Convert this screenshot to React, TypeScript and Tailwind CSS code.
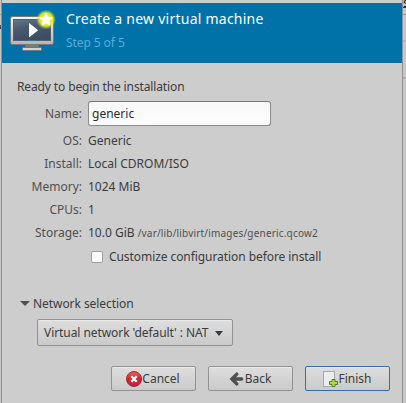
import type { ReactNode } from "react";

function MachineIcon() {
  return (
    <svg width="48" height="46" viewBox="0 0 48 46" className="block shrink-0">
      <defs>
        <linearGradient id="frame" x1="0" y1="0" x2="0" y2="1">
          <stop offset="0" stopColor="#f4f4f2" />
          <stop offset="1" stopColor="#b4b4b2" />
        </linearGradient>
        <linearGradient id="screen" x1="0" y1="0" x2="0.4" y2="1">
          <stop offset="0" stopColor="#66788c" />
          <stop offset="0.5" stopColor="#47586d" />
          <stop offset="1" stopColor="#3c4c61" />
        </linearGradient>
        <radialGradient id="glow">
          <stop offset="0" stopColor="#f4f51a" />
          <stop offset="0.65" stopColor="#e9ef22" stopOpacity="0.95" />
          <stop offset="1" stopColor="#b9d63c" stopOpacity="0" />
        </radialGradient>
      </defs>
      <path d="M17 37h14v4h-14z" fill="#777976" />
      <rect x="14.5" y="40.5" width="19" height="3" rx="1" fill="#d4d4d2" stroke="#777976" />
      <rect x="2.5" y="9.500" width="43" height="28" rx="2" fill="url(#frame)" stroke="#777976" />
      <rect x="5.500" y="12.500" width="37" height="21" fill="url(#screen)" stroke="#53606f" />
      <path d="M21 16v14.500l9.200-7.250z" fill="#fff" />
      <circle cx="38" cy="12.500" r="10" fill="url(#glow)" />
      <path d="M38 6l1.900 4.100 4.500.6-3.300 3.100.8 4.500-3.900-2.200-3.900 2.200.8-4.500-3.300-3.100 4.500-.6z" fill="#fff" stroke="#fff" strokeWidth="0.6" />
    </svg>
  );
}

function CancelIcon() {
  return (
    <svg width="16" height="16" viewBox="0 0 16 16" className="block shrink-0">
      <defs>
        <linearGradient id="red" x1="0" y1="0" x2="0" y2="1">
          <stop offset="0" stopColor="#e8625c" />
          <stop offset="0.5" stopColor="#cf2733" />
          <stop offset="1" stopColor="#b42450" />
        </linearGradient>
      </defs>
      <circle cx="8" cy="8" r="7.500" fill="url(#red)" stroke="#ad2530" />
      <path d="M5.300 5.300l5.400 5.400M10.700 5.300l-5.400 5.400" stroke="#fff" strokeWidth="2.300" />
    </svg>
  );
}

function BackIcon() {
  return (
    <svg width="16" height="16" viewBox="0 0 16 16" className="block shrink-0">
      <path d="M7.800 3.100L2.900 8l4.900 4.900M4 8h8.700" fill="none" stroke="#505050" strokeWidth="3.400" strokeLinecap="round" />
    </svg>
  );
}

function FinishIcon() {
  return (
    <svg width="16" height="16" viewBox="0 0 16 16" className="block shrink-0">
      <rect x="1.500" y="0.500" width="11" height="15" fill="#ededed" stroke="#a8a8a8" />
      <path d="M10 8.500h3v2h2.500v3h-2.500v2h-3v-2h-2.500v-3h2.500z" fill="#b5d842" stroke="#55801c" />
    </svg>
  );
}

function Row({ label, children }: { label: string; children: ReactNode }) {
  return (
    <div className="flex h-[23px] items-center">
      <span className="w-[81px] pr-[1px] text-right text-[#505050]">{label}</span>
      <span className="pl-[5px]">{children}</span>
    </div>
  );
}

function DialogButton({ icon, text, focused }: { icon: ReactNode; text: string; focused?: boolean }) {
  return (
    <button
      className={`flex h-[25px] w-[85px] items-center justify-center rounded-[2px] border bg-linear-to-b from-[#dedede] to-[#cacaca] pr-px shadow-[inset_0_1px_0_#e8e8e8] ${
        focused ? "border-[#2f70b7]" : "border-[#929292]"
      }`}
    >
      {icon}
      <span>{text}</span>
    </button>
  );
}

export default function App() {
  return (
    <div className="flex h-[403px] w-[406px] overflow-hidden bg-[#cdcdcd] font-['Noto_Sans',sans-serif] text-[12px] leading-[16px] whitespace-nowrap text-[#3c3c3c]">
      <div className="w-px shrink-0 bg-[#c6c6c6] pt-[14px]">
        <div className="h-px bg-[#999]" />
        <div className="mt-[10px] h-[2px] bg-[#8b4b35]" />
        <div className="h-[2px] bg-[#26406d]" />
      </div>
      <main className="flex w-[402px] shrink-0 flex-col border-x border-[#929292] bg-[#cdcdcd] pt-[3px]">
        <header className="flex h-[60px] shrink-0 bg-[#0072a8] pl-[6px]">
          <div className="pt-[4px]">
            <MachineIcon />
          </div>
          <div className="pt-[6px] pl-[10px]">
            <h1 className="text-[14px] leading-[20px] tracking-[0.24px] text-white">Create a new virtual machine</h1>
            <p className="pt-[5px] leading-[18px] tracking-[-0.08px] text-[#5caada]">Step 5 of 5</p>
          </div>
        </header>
        <p className="mt-[15px] pl-[15px] leading-[17px] tracking-[-0.13px]">Ready to begin the installation</p>
        <div className="mt-[6px] flex h-[25px] items-center">
          <span className="w-[81px] pr-[1px] text-right text-[#505050]">Name:</span>
          <div className="ml-[5px] flex h-[25px] w-[183px] items-center rounded-[3px] border border-[#8b8b8b] border-t-[#777] bg-linear-to-b from-[#f8f8f8] to-[#fdfdfd] pl-[3px] text-[#2b2b2b]">
            generic
          </div>
        </div>
        <div className="mt-[3px]">
          <Row label="OS:">Generic</Row>
          <Row label="Install:">Local CDROM/ISO</Row>
          <Row label="Memory:">1024 MiB</Row>
          <Row label="CPUs:">1</Row>
          <Row label="Storage:">
            10.0 GiB <span className="text-[10px] tracking-[0.18px] text-[#505050]">/var/lib/libvirt/images/generic.qcow2</span>
          </Row>
        </div>
        <label className="mt-[3px] flex h-[20px] items-center pl-[89px]">
          <span className="h-[12px] w-[12px] rounded-[2px] border border-[#a0a0a0] bg-[#fbfbfb]" />
          <span className="pl-[6px] tracking-[-0.07px]">Customize configuration before install</span>
        </label>
        <div className="mt-[29px] flex h-[16px] items-center pl-[18px]">
          <svg width="10" height="5" viewBox="0 0 10 5" className="mb-[2px]">
            <path d="M0 0h10L5 5z" fill="#505050" />
          </svg>
          <span className="pl-[3px] tracking-[-0.06px]">Network selection</span>
        </div>
        <button className="mt-[7px] ml-[35px] flex h-[27px] w-[196px] shrink-0 items-center rounded-[2px] border border-[#929292] bg-linear-to-b from-[#dedede] to-[#cacaca] pl-[6px] shadow-[inset_0_1px_0_#e8e8e8]">
          <span className="w-[165px] text-left tracking-[-0.07px]">Virtual network 'default' : NAT</span>
          <svg width="8" height="5" viewBox="0 0 8 5" className="mt-[1px] ml-[6px]">
            <path d="M0 0h8L4 5z" fill="#3c3c3c" />
          </svg>
        </button>
        <footer className="mt-[20px] flex gap-[12px] pl-[109px]">
          <DialogButton icon={<CancelIcon />} text="Cancel" />
          <DialogButton icon={<BackIcon />} text="Back" />
          <DialogButton icon={<FinishIcon />} text="Finish" focused />
        </footer>
      </main>
      <aside className="relative w-[3px] shrink-0 overflow-hidden bg-[#c7c7c7]">
        <span className="absolute top-[-5px] left-0 text-[12px] text-[#222]">s</span>
        <div className="mt-[7px] h-px bg-[#333]" />
        <div className="mt-[6px] h-px bg-[#999]" />
        <div className="mt-[25px] h-[2px] bg-[#b8b8b8]" />
        <div className="mt-[35px] h-[2px] bg-[#b0b0b0]" />
      </aside>
    </div>
  );
}
